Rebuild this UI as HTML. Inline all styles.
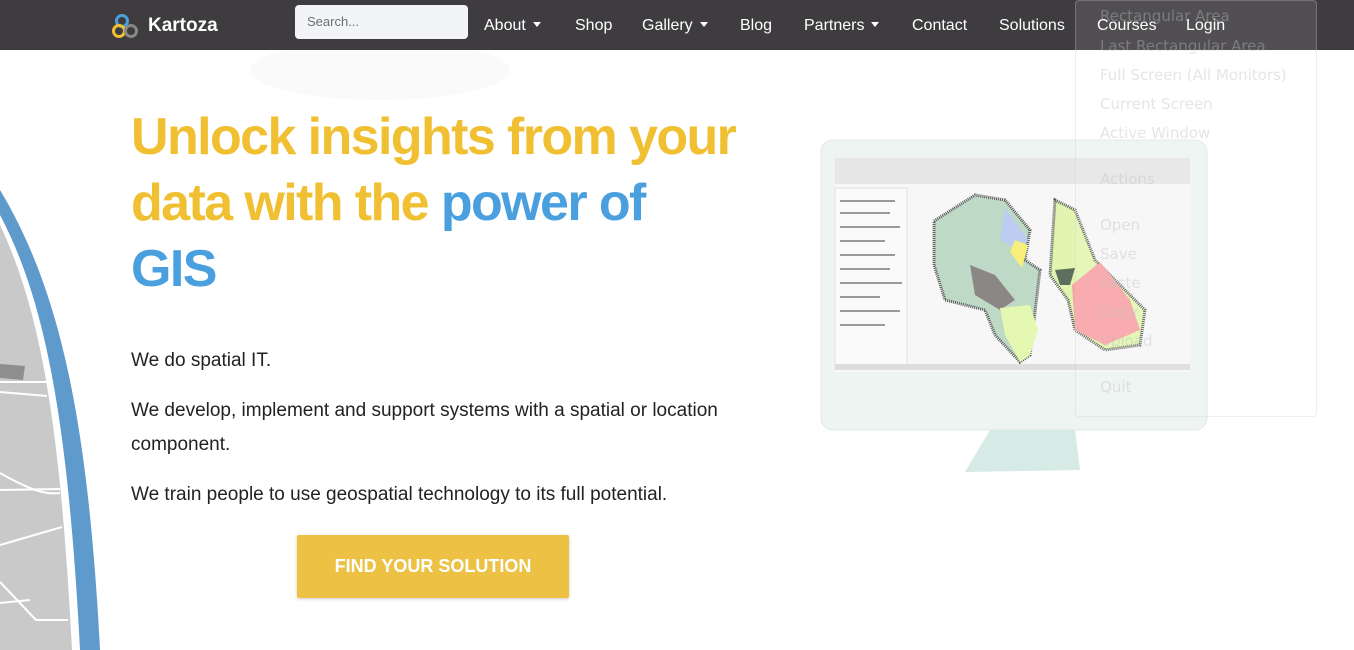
<!DOCTYPE html>
<html><head><meta charset="utf-8"><style>
*{margin:0;padding:0;box-sizing:border-box}
body{width:1354px;height:650px;overflow:hidden;background:#fff;font-family:"Liberation Sans",sans-serif;position:relative}
.nav{position:absolute;left:0;top:0;width:1354px;height:50px;background:#3e3c3f}
.nav a{position:absolute;top:17px;color:#fff;font-size:16px;text-decoration:none}
.car{display:inline-block;width:0;height:0;border-left:4px solid transparent;border-right:4px solid transparent;border-top:5px solid #fff;margin-left:7px;vertical-align:3px}
.search{position:absolute;left:295px;top:5px;width:173px;height:34px;background:#f3f4f6;border-radius:4px;color:#6b6f78;font-size:13px;padding:9px 12px}
h1{position:absolute;left:131px;top:104px;font-size:52px;line-height:66px;font-weight:bold;color:#f0c032;letter-spacing:-1.6px}
h1 span{color:#4aa0df}
.p{position:absolute;left:131px;font-size:19px;color:#222;line-height:34px}
.btn{position:absolute;left:297px;top:535px;width:272px;height:63px;background:#ecc144;color:#fff;font-weight:bold;font-size:18px;text-align:center;line-height:63px;border-radius:2px;box-shadow:0 1px 3px rgba(0,0,0,.2)}
.ov{position:absolute;left:1075px;top:0;width:242px;height:417px;background:rgba(255,255,255,.1);border:1px solid rgba(200,200,200,.3);border-radius:4px}
.ov div{position:absolute;left:24px;font-size:15px;color:rgba(190,190,190,.4);font-family:"DejaVu Sans",sans-serif}
</style></head><body>
<svg style="position:absolute;left:0;top:0" width="1354" height="650">
<path d="M0,190 C60,290 88,420 100,650 L0,650Z" fill="#5f9acd"/>
<path d="M0,215 C45,300 68,420 80,650 L0,650Z" fill="#fff"/>
<path d="M0,225 C40,310 60,420 72,650 L0,650Z" fill="#c9c9c9"/>
<path d="M0,382 L48,382 M0,392 L47,396 M0,490 L60,489 M0,545 L62,527 M0,582 L36,620 L68,620 M0,603 L30,600 M0,473 C30,490 45,495 60,493" stroke="#fff" stroke-width="2" fill="none"/>
<path d="M0,364 L25,366 L23,380 L0,378Z" fill="#8e8e8e"/>
<ellipse cx="380" cy="70" rx="130" ry="30" fill="#fafafa"/>
<rect x="821" y="140" width="386" height="290" rx="12" fill="#eef4f2" stroke="#dfe8e6"/>
<path d="M990,430 L1075,430 L1080,470 L965,472 Z" fill="#d6ebe6"/>
<rect x="835" y="158" width="355" height="214" fill="#f7f7f7"/>
<rect x="835" y="158" width="355" height="26" fill="#e6e6e6"/>
<rect x="835" y="188" width="72" height="178" fill="#fafafa" stroke="#ccc" stroke-width=".5"/>
<g fill="#999"><rect x="840" y="200" width="55" height="2"/><rect x="840" y="212" width="50" height="2"/><rect x="840" y="226" width="60" height="2"/><rect x="840" y="240" width="45" height="2"/><rect x="840" y="254" width="55" height="2"/><rect x="840" y="268" width="50" height="2"/><rect x="840" y="282" width="62" height="2"/><rect x="840" y="296" width="40" height="2"/><rect x="840" y="310" width="60" height="2"/><rect x="840" y="324" width="45" height="2"/></g>
<g stroke="#555" stroke-width="3" stroke-dasharray="1 1">
<path d="M934,221 L975,195 L1005,200 L1030,230 L1025,260 L1040,270 L1030,355 L1020,362 L995,335 L985,310 L945,300 L934,265Z" fill="#bfd9c7"/>
<path d="M1055,200 L1075,210 L1095,260 L1145,310 L1140,345 L1105,350 L1075,330 L1068,300 L1050,275Z" fill="#e1f5b0"/>
</g>
<path d="M1005,208 L1028,240 L1020,250 L1000,240Z" fill="#bcccf2"/>
<path d="M1015,240 L1028,245 L1022,268 L1010,252Z" fill="#f7ee7c"/>
<path d="M970,265 L995,275 L1015,300 L1000,310 L975,295Z" fill="#8b8785"/>
<path d="M1000,308 L1030,305 L1038,330 L1030,355 L1020,362 L1005,335Z" fill="#e4f8b2"/>
<path d="M1072,285 L1100,262 L1130,300 L1140,330 L1105,345 L1075,330Z" fill="#f8a3a6"/>
<path d="M1055,270 L1075,268 L1070,285 L1060,285Z" fill="#5f6f5e"/>
<rect x="835" y="364" width="355" height="6" fill="#ddd"/>
</svg>
<div class="nav">
<svg style="position:absolute;left:112px;top:13px" width="28" height="26" viewBox="0 0 28 26"><circle cx="10" cy="8" r="5.5" fill="none" stroke="#4aa0df" stroke-width="3"/><circle cx="7" cy="18" r="5.5" fill="none" stroke="#f0c032" stroke-width="3"/><circle cx="19" cy="18" r="5.5" fill="none" stroke="#888" stroke-width="3"/></svg>
<a style="left:148px;top:15px;font-size:19px;font-weight:bold">Kartoza</a>
<div class="search">Search...</div>
<a style="left:484px">About<span class="car"></span></a>
<a style="left:575px">Shop</a>
<a style="left:642px">Gallery<span class="car"></span></a>
<a style="left:740px">Blog</a>
<a style="left:804px">Partners<span class="car"></span></a>
<a style="left:912px">Contact</a>
<a style="left:999px">Solutions</a>
<a style="left:1097px">Courses</a>
<a style="left:1186px">Login</a>
</div>
<h1>Unlock insights from your<br>data with the <span>power of<br>GIS</span></h1>
<div class="p" style="top:344px">We do spatial IT.</div>
<div class="p" style="top:394px;width:620px">We develop, implement and support systems with a spatial or location component.</div>
<div class="p" style="top:478px">We train people to use geospatial technology to its full potential.</div>
<div class="btn">FIND YOUR SOLUTION</div>
<div class="ov">
<div style="top:6px">Rectangular Area</div>
<div style="top:36px">Last Rectangular Area</div>
<div style="top:65px">Full Screen (All Monitors)</div>
<div style="top:94px">Current Screen</div>
<div style="top:123px">Active Window</div>
<div style="top:169px">Actions</div>
<div style="top:215px">Open</div>
<div style="top:244px">Save</div>
<div style="top:273px">Paste</div>
<div style="top:302px">Copy</div>
<div style="top:331px">Upload</div>
<div style="top:377px">Quit</div>
</div>
</body></html>
